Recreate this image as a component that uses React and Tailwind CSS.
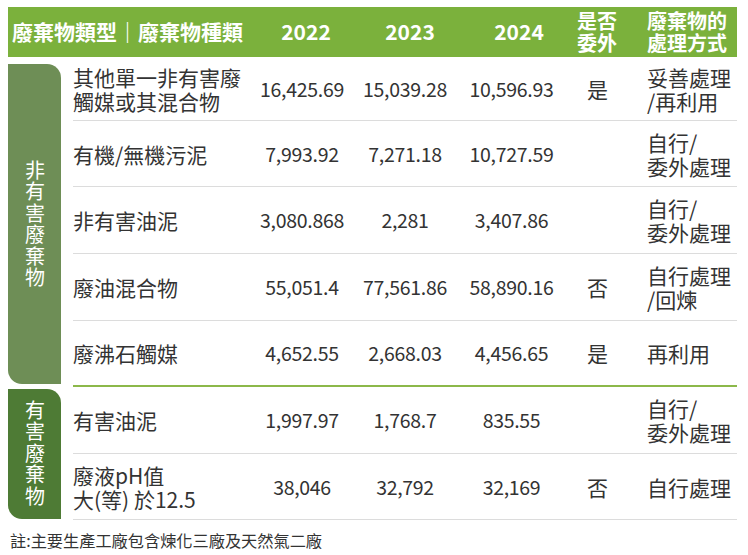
import React from "react";

const font = { fontFamily: '"Noto Sans CJK TC", "Noto Sans", sans-serif' };

const group1 = [
  { name: ["其他單一非有害廢", "觸媒或其混合物"], v: ["16,425.69", "15,039.28", "10,596.93"], out: "是", m: ["妥善處理", "/再利用"], h: "h-[64px] border-b border-[#dcdcdc]" },
  { name: ["有機/無機污泥"], v: ["7,993.92", "7,271.18", "10,727.59"], out: "", m: ["自行/", "委外處理"], h: "h-[66px] border-b border-[#dcdcdc]" },
  { name: ["非有害油泥"], v: ["3,080.868", "2,281", "3,407.86"], out: "", m: ["自行/", "委外處理"], h: "h-[67px] border-b border-[#dcdcdc]" },
  { name: ["廢油混合物"], v: ["55,051.4", "77,561.86", "58,890.16"], out: "否", m: ["自行處理", "/回煉"], h: "h-[67px] border-b border-[#dcdcdc]" },
  { name: ["廢沸石觸媒"], v: ["4,652.55", "2,668.03", "4,456.65"], out: "是", m: ["再利用"], h: "h-[66px] border-b-2 border-[#8cb84a]" },
];

const group2 = [
  { name: ["有害油泥"], v: ["1,997.97", "1,768.7", "835.55"], out: "", m: ["自行/", "委外處理"], h: "h-[67px] border-b border-[#dcdcdc]" },
  { name: ["廢液pH值", "大(等) 於12.5"], v: ["38,046", "32,792", "32,169"], out: "否", m: ["自行處理"], h: "h-[66px] border-b border-[#dcdcdc]" },
];

function Row({ r }) {
  return (
    <div className={`grid grid-cols-[179px_100px_106px_107px_65px_107px] items-center text-[#333333] ${r.h}`}>
      <div className="text-[21px] leading-[24px]">
        {r.name.map((t, i) => (
          <div key={i} className="whitespace-nowrap">{t}</div>
        ))}
      </div>
      {r.v.map((t, i) => (
        <div key={i} className="text-center text-[19.5px] leading-[24px] tracking-[-0.3px]">{t}</div>
      ))}
      <div className="text-center text-[21px] leading-[24px]">{r.out}</div>
      <div className="pl-[17px] text-[21px] leading-[24px]">
        {r.m.map((t, i) => (
          <div key={i} className="whitespace-nowrap">{t}</div>
        ))}
      </div>
    </div>
  );
}

function Block({ text, cls }) {
  return (
    <div className={`w-[53px] flex items-center justify-center text-white rounded-tr-[14px] rounded-bl-[14px] ${cls}`}>
      <span className="[writing-mode:vertical-rl] text-[20px] leading-[24px] tracking-[1.5px]">{text}</span>
    </div>
  );
}

export default function App() {
  return (
    <div className="w-[748px] h-[555px] bg-white overflow-hidden" style={font}>
      <div className="ml-[8px] mt-[7px] w-[729px] h-[50px] bg-[#7bb13c] text-white font-bold grid grid-cols-[244px_108px_100px_118px_38px_121px] items-center">
        <div className="pl-[4px] text-[21px] whitespace-nowrap">廢棄物類型｜廢棄物種類</div>
        <div className="text-center text-[21px]">2022</div>
        <div className="text-center text-[21px]">2023</div>
        <div className="text-center text-[21px]">2024</div>
        <div className="text-center text-[20px] leading-[22px] whitespace-nowrap flex flex-col items-center">
          <span>是否</span>
          <span>委外</span>
        </div>
        <div className="pl-[31px] text-[20px] leading-[22px] whitespace-nowrap">
          <div>廢棄物的</div>
          <div>處理方式</div>
        </div>
      </div>

      <div className="flex pl-[8px]">
        <Block text="非有害廢棄物" cls="mt-[7px] mb-[3px] bg-[#6e8e56]" />
        <div className="ml-[12px] w-[664px]">
          {group1.map((r, i) => (
            <Row key={i} r={r} />
          ))}
        </div>
      </div>

      <div className="flex pl-[8px]">
        <Block text="有害廢棄物" cls="mt-[2px] mb-[1px] bg-[#4e7b35]" />
        <div className="ml-[12px] w-[664px]">
          {group2.map((r, i) => (
            <Row key={i} r={r} />
          ))}
        </div>
      </div>

      <div className="pl-[10px] mt-[10px] text-[16.2px] leading-[20px] text-[#333333] whitespace-nowrap">
        註:主要生產工廠包含煉化三廠及天然氣二廠
      </div>
    </div>
  );
}
